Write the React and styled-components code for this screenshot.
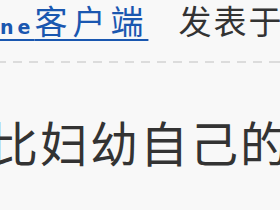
import React from "react";
import styled, { createGlobalStyle } from "styled-components";

const Global = createGlobalStyle`
  html, body { margin: 0; padding: 0; background: #f8f8f8; }
  body { width: 280px; height: 210px; overflow: hidden; }
`;

const Page = styled.div`
  width: 280px;
  height: 210px;
  overflow: hidden;
  background: #f8f8f8;
  font-family: "Noto Sans CJK SC", "Noto Sans", sans-serif;
  color: #333;
`;

const Meta = styled.div`
  display: flex;
  align-items: baseline;
  white-space: nowrap;
  height: 44px;
  font-size: 33px;
  line-height: 40px;
`;

const SourceLink = styled.a`
  color: #1a57b0;
  text-decoration: underline;
  text-decoration-thickness: 2px;
  text-underline-offset: 5px;
  letter-spacing: 5px;
`;

const Latin = styled.span`
  font-family: "DejaVu Sans", sans-serif;
  font-size: 19px;
  font-weight: bold;
  letter-spacing: 4px;
`;

const Posted = styled.span`
  margin-left: 30px;
  letter-spacing: 2px;
  color: #333;
`;

const Divider = styled.div`
  margin-top: 17px;
  height: 2px;
  background: repeating-linear-gradient(
    to right,
    #dcdcdc 0 9px,
    transparent 9px 16px
  );
  background-position: -3px 0;
`;

const Body = styled.p`
  margin: 50px 0 0 -10px;
  font-size: 48px;
  line-height: 56px;
  letter-spacing: 2px;
  white-space: nowrap;
  color: #333;
`;

export default function App() {
  return (
    <Page>
      <Global />
      <Meta>
        <SourceLink href="#">
          <Latin>ne</Latin>客户端
        </SourceLink>
        <Posted>发表于</Posted>
      </Meta>
      <Divider />
      <Body>比妇幼自己的</Body>
    </Page>
  );
}
